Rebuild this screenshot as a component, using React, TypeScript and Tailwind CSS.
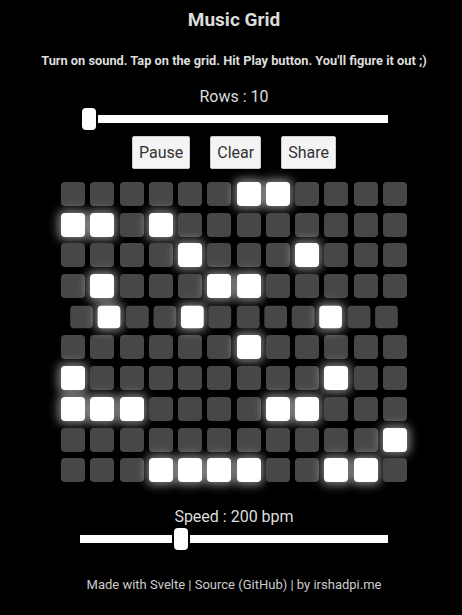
import React from "react";

// active cells per row (1-based columns)
const pattern: number[][] = [
  [7, 8],
  [1, 2, 4],
  [5, 9],
  [2, 6, 7],
  [2, 5, 10],
  [7],
  [1, 10],
  [1, 2, 3, 8, 9],
  [12],
  [4, 5, 6, 7, 10, 11],
];

const playingRow = 4;

function Slider({ pos }: { pos: number }) {
  return (
    <div className="relative w-[308px] h-[26px]">
      <div className="absolute left-0 right-0 top-[9px] h-[8px] bg-white" />
      <div
        className="absolute top-0 w-[18px] h-[26px] rounded-[6px] border-2 border-black bg-white"
        style={{ left: pos }}
      />
    </div>
  );
}

export default function App() {
  return (
    <main
      className="min-h-[615px] bg-black text-[#dddddd] pl-[6px] flex flex-col items-center"
      style={{ fontFamily: "Roboto, 'Liberation Sans', sans-serif" }}
    >
      <h1 className="mt-[9px] text-[19px] leading-[22px] font-bold">Music Grid</h1>
      <h5 className="mt-[22px] text-[12.8px] leading-[16px] font-bold">
        Turn on sound. Tap on the grid. Hit Play button. You'll figure it out ;)
      </h5>
      <p className="mt-[18px] text-[16px] leading-[19px]">Rows : 10</p>
      <Slider pos={0} />

      <div className="mt-[4px] flex gap-[20px]">
        {["Pause", "Clear", "Share"].map((label) => (
          <button
            key={label}
            className="h-[33px] px-[6px] bg-[#f4f4f4] text-[#333333] border border-[#cccccc] rounded-[2px] text-[16px] leading-[19px]"
          >
            {label}
          </button>
        ))}
      </div>

      {/* Grid */}
      <div className="mt-[13px] w-[346px] flex flex-col gap-[6.7px]">
        {pattern.map((row, r) => (
          <div
            key={r}
            className={`flex justify-between ${r === playingRow ? "scale-[0.947]" : ""}`}
          >
            {Array.from({ length: 12 }, (_, c) => {
              const on = row.includes(c + 1);
              return (
                <div
                  key={c}
                  className={
                    on
                      ? "w-[24px] h-[24px] rounded-[4px] bg-white shadow-[0_0_10px_3px_rgba(255,255,255,0.5)]"
                      : "w-[24px] h-[24px] rounded-[4px] bg-[#474747]"
                  }
                />
              );
            })}
          </div>
        ))}
      </div>

      <p className="mt-[25px] text-[16px] leading-[19px]">Speed : 200 bpm</p>
      <Slider pos={92} />

      <p className="mt-[25px] text-[13px] leading-[16px] text-[#cccccc]">
        Made with Svelte | Source (GitHub) | by irshadpi.me
      </p>
    </main>
  );
}
